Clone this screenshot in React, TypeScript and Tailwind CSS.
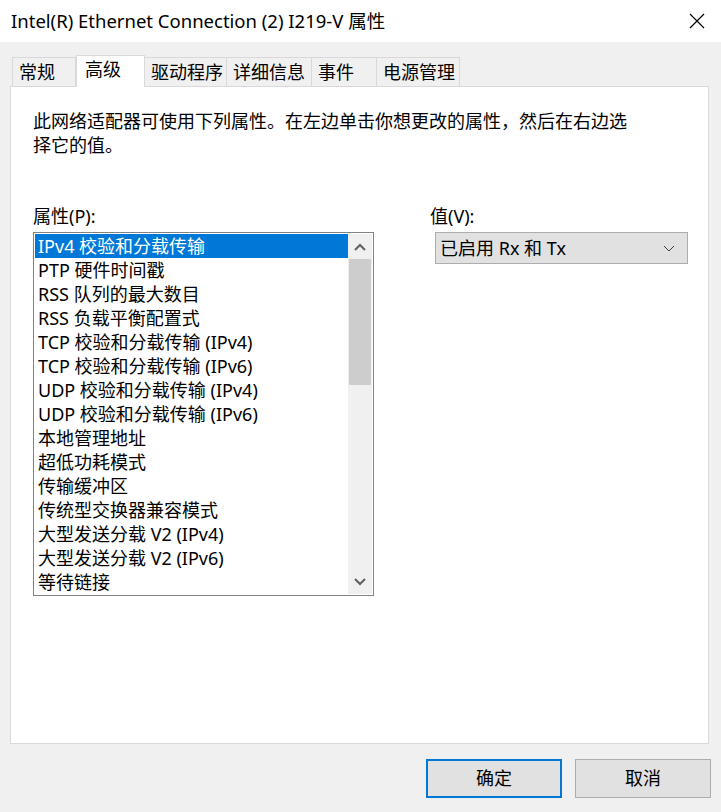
import React from 'react';

const font = { fontFamily: '"Noto Sans", "Noto Sans CJK SC", sans-serif' };

const tabs = [
  { label: '常规', w: 'w-[64px]' },
  { label: '高级', w: 'w-[69px]', active: true },
  { label: '驱动程序', w: 'w-[82px]' },
  { label: '详细信息', w: 'w-[85px]' },
  { label: '事件', w: 'w-[65px]' },
  { label: '电源管理', w: 'w-[83px]' },
];

const props = [
  'IPv4 校验和分载传输',
  'PTP 硬件时间戳',
  'RSS 队列的最大数目',
  'RSS 负载平衡配置式',
  'TCP 校验和分载传输 (IPv4)',
  'TCP 校验和分载传输 (IPv6)',
  'UDP 校验和分载传输 (IPv4)',
  'UDP 校验和分载传输 (IPv6)',
  '本地管理地址',
  '超低功耗模式',
  '传输缓冲区',
  '传统型交换器兼容模式',
  '大型发送分载 V2 (IPv4)',
  '大型发送分载 V2 (IPv6)',
  '等待链接',
];

function Chevron({ up }: { up?: boolean }) {
  return (
    <svg width="12" height="8" viewBox="0 0 12 8">
      <path
        d={up ? 'M1 7 L6 2 L11 7' : 'M1 1 L6 6 L11 1'}
        fill="none"
        stroke="#606060"
        strokeWidth="2"
      />
    </svg>
  );
}

export default function App() {
  return (
    <div className="w-[721px] h-[812px] bg-[#f0f0f0] flex flex-col text-[18px] text-black overflow-hidden" style={font}>
      {/* title bar */}
      <div className="h-[42px] bg-white flex items-center justify-between pl-[11px] pr-[16px]">
        <span className="text-[18.5px] leading-none">Intel(R) Ethernet Connection (2) I219-V 属性</span>
        <svg width="16" height="16" viewBox="0 0 16 16">
          <path d="M1 1 L15 15 M15 1 L1 15" stroke="#000" strokeWidth="1.2" />
        </svg>
      </div>

      {/* tabs */}
      <div className="flex items-end pl-[12px] mt-[13px] relative z-10">
        {tabs.map((t) =>
          t.active ? (
            <div
              key={t.label}
              className={`${t.w} h-[32px] bg-white border border-[#d9d9d9] border-b-0 -mb-px pl-[8px] pt-px leading-[24px]`}
            >
              {t.label}
            </div>
          ) : (
            <div
              key={t.label}
              className={`${t.w} h-[29px] border border-[#d9d9d9] border-b-0 border-l-0 first:border-l pl-[6px] pt-[2px] leading-[24px]`}
            >
              {t.label}
            </div>
          )
        )}
      </div>

      {/* panel */}
      <div className="mx-[10px] mr-[12px] h-[658px] bg-white border border-[#d9d9d9] flex flex-col pl-[22px] pt-[22px]">
        <p className="leading-[24px] w-[610px]">
          此网络适配器可使用下列属性。在左边单击你想更改的属性，然后在右边选择它的值。
        </p>
        <div className="flex mt-[47px]">
          <div className="w-[341px]">
            <div className="leading-[24px] mb-[4px]">属性(P):</div>
            <div className="h-[364px] border border-[#828282] flex">
              <div className="flex-1 pl-px pt-px">
                {props.map((p, i) => (
                  <div
                    key={p}
                    className={
                      'h-[24px] leading-[24px] pl-[3px] whitespace-nowrap ' +
                      (i === 0 ? 'bg-[#0078d7] text-white' : '')
                    }
                  >
                    {p}
                  </div>
                ))}
              </div>
              <div className="w-[24px] bg-[#f0f0f0] flex flex-col mt-px mb-px mr-px">
                <div className="h-[25px] flex items-center justify-center">
                  <Chevron up />
                </div>
                <div className="h-[126px] bg-[#cdcdcd] mx-px" />
                <div className="flex-1" />
                <div className="h-[24px] flex items-center justify-center">
                  <Chevron />
                </div>
              </div>
            </div>
          </div>
          <div className="ml-[56px]">
            <div className="leading-[24px] mb-[4px]">值(V):</div>
            <div className="ml-[5px] w-[253px] h-[32px] bg-[#e1e1e1] border border-[#adadad] flex items-center justify-between pl-[4px] pr-[12px]">
              <span className="leading-none">已启用 Rx 和 Tx</span>
              <svg width="12" height="7" viewBox="0 0 12 7">
                <path d="M1 1 L6 6 L11 1" fill="none" stroke="#404040" strokeWidth="1" />
              </svg>
            </div>
          </div>
        </div>
      </div>

      {/* buttons */}
      <div className="flex justify-end gap-[13px] pr-[10px] mt-[15px]">
        <button className="w-[136px] h-[39px] bg-[#e1e1e1] border-2 border-[#0078d7]">确定</button>
        <button className="w-[136px] h-[39px] bg-[#e1e1e1] border border-[#adadad]">取消</button>
      </div>
    </div>
  );
}
